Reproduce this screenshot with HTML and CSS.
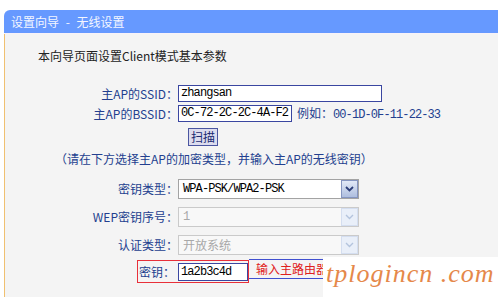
FILE: index.html
```html
<!DOCTYPE html>
<html lang="zh-CN">
<head>
<meta charset="utf-8">
<title>设置向导 - 无线设置</title>
<link rel="stylesheet" href="styles.css">
</head>
<body>
<div class="wizard">
  <div class="title">设置向导 - 无线设置</div>
  <div class="panel">
    <p class="intro">本向导页面设置Client模式基本参数</p>
    <div class="row r-ssid">
      <span class="label">主AP的SSID：</span>
      <span class="input w-ssid">zhangsan</span>
    </div>
    <div class="row r-bssid">
      <span class="label">主AP的BSSID：</span>
      <span class="input w-bssid">0C-72-2C-2C-4A-F2</span>
      <span class="hint">例如：<span class="mono">00-1D-0F-11-22-33</span></span>
    </div>
    <div class="row r-scan">
      <span class="label"></span>
      <button class="btn" type="button">扫描</button>
    </div>
    <p class="note">（请在下方选择主AP的加密类型，并输入主AP的无线密钥）</p>
    <div class="row r-sel">
      <span class="label">密钥类型：</span>
      <div class="select">
        <span class="val mono">WPA-PSK/WPA2-PSK</span>
        <span class="arrow"><svg width="9" height="6" viewBox="0 0 9 6"><polyline points="1,1 4.5,4.5 8,1" fill="none" stroke="currentColor" stroke-width="1.8"/></svg></span>
      </div>
    </div>
    <div class="row r-sel">
      <span class="label">WEP密钥序号：</span>
      <div class="select dis">
        <span class="val mono">1</span>
        <span class="arrow"><svg width="9" height="6" viewBox="0 0 9 6"><polyline points="1,1 4.5,4.5 8,1" fill="none" stroke="currentColor" stroke-width="1.4"/></svg></span>
      </div>
    </div>
    <div class="row r-sel">
      <span class="label">认证类型：</span>
      <div class="select dis">
        <span class="val">开放系统</span>
        <span class="arrow"><svg width="9" height="6" viewBox="0 0 9 6"><polyline points="1,1 4.5,4.5 8,1" fill="none" stroke="currentColor" stroke-width="1.4"/></svg></span>
      </div>
    </div>
    <div class="row r-key">
      <div class="hl">
        <span class="klabel">密钥：</span>
        <span class="input w-key">1a2b3c4d</span>
      </div>
      <div class="tip">输入主路由器的无线密钥</div>
    </div>
  </div>
</div>
<div class="watermark">tplogincn .com</div>
</body>
</html>
```

FILE: styles.css
```css
html, body {
  margin: 0;
  height: 297px;
  overflow: hidden;
}

body {
  padding: 10px 0 0 4px;
  box-sizing: border-box;
  background: #ffffff;
  font-family: "Noto Sans CJK SC", sans-serif;
  font-size: 12px;
  line-height: 16px;
  color: #222;
}

.title {
  height: 23px;
  line-height: 23px;
  background: #6699ff;
  color: #f4f6ff;
  padding-left: 7px;
  border-top-left-radius: 6px;
  border-bottom: 1px solid #f8f2f8;
  word-spacing: 4px;
}

.panel {
  background: #f4f4f4;
  border-left: 1px solid #f0c070;
  padding: 14px 0 0 33px;
  height: 263px;
  box-sizing: border-box;
}

.intro {
  margin: 0;
  height: 16px;
  color: #222;
}

.mono {
  font-family: "Liberation Mono", monospace;
  font-size: 12px;
  letter-spacing: -0.9px;
}

.row {
  display: flex;
  align-items: center;
}

.label {
  flex: none;
  width: 140px;
  text-align: right;
  color: #233f8f;
}

.r-ssid { height: 17px; margin-top: 21px; }
.r-bssid { height: 17px; margin-top: 3px; }
.r-scan { height: 18px; margin-top: 6px; }
.r-sel { height: 20px; margin-top: 8px; }
.note + .r-sel { margin-top: 12px; }

.input {
  box-sizing: border-box;
  height: 17px;
  border: 1px solid #3a46a0;
  background: #fff;
  color: #000;
  font-family: "Liberation Mono", monospace;
  font-size: 12px;
  letter-spacing: -0.9px;
  line-height: 15px;
  padding-left: 2px;
  white-space: nowrap;
  overflow: hidden;
}

.w-ssid { width: 204px; }
.w-bssid { width: 114px; }

.hint {
  margin-left: 5px;
  color: #233f8f;
  white-space: nowrap;
}

.btn {
  margin-left: 10px;
  width: 30px;
  height: 18px;
  padding: 0;
  border: 1px solid #4a55a0;
  background: #dcdcee;
  color: #1a2a70;
  font-family: "Noto Sans CJK SC", sans-serif;
  font-size: 12px;
  line-height: 16px;
}

.note {
  margin: 5px 0 0 17px;
  height: 16px;
  color: #233f8f;
}

.select {
  box-sizing: border-box;
  width: 181px;
  height: 20px;
  border: 1px solid #a3a3a3;
  background: #fff;
  display: flex;
  align-items: center;
  justify-content: space-between;
}

.select .val {
  padding-left: 4px;
  color: #000;
}

.arrow {
  box-sizing: border-box;
  width: 17px;
  height: 18px;
  border: 1px solid #8595c0;
  background: linear-gradient(#e2e9f7, #aebedf);
  color: #2c3e78;
  display: flex;
  align-items: center;
  justify-content: center;
}

.select.dis {
  border-color: #cacaca;
  background: #f8f8f8;
}

.select.dis .val {
  color: #a8a8a8;
}

.select.dis .arrow {
  border-color: #d4def0;
  background: #e9eff9;
  color: #b4c4dd;
}

.r-key {
  margin-top: 5px;
  margin-left: 99px;
  align-items: flex-start;
}

.hl {
  box-sizing: border-box;
  height: 23px;
  border: 1px solid #e8303a;
  display: flex;
  align-items: center;
}

.klabel {
  width: 39px;
  padding-left: 1px;
  color: #233f8f;
}

.w-key {
  width: 70px;
  height: 18px;
  line-height: 16px;
}

.tip {
  box-sizing: border-box;
  margin-top: -1px;
  width: 74px;
  height: 20px;
  border-top: 1px solid #4050d0;
  border-bottom: 1px solid #4050d0;
  padding-left: 7px;
  line-height: 18px;
  color: #e02020;
  white-space: nowrap;
  overflow: hidden;
}

.watermark {
  position: absolute;
  right: 0;
  bottom: 0;
  width: 175px;
  height: 40px;
  box-sizing: border-box;
  padding: 2px 0 0 3px;
  background: #ffffff;
  color: #e5884a;
  font-family: "Liberation Serif", serif;
  font-style: italic;
  font-size: 26px;
  line-height: 30px;
  letter-spacing: 1px;
  white-space: nowrap;
}
```
